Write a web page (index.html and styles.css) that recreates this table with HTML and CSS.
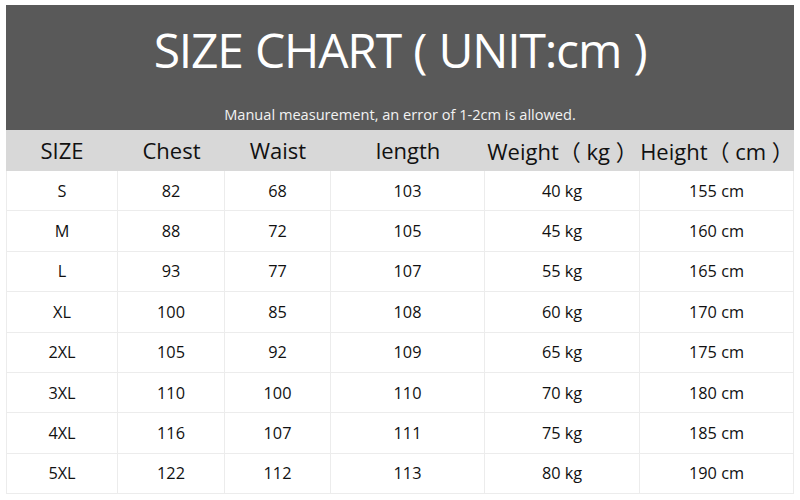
FILE: index.html
```html
<!DOCTYPE html>
<html>
<head>
<meta charset="utf-8">
<link rel="stylesheet" href="styles.css">
</head>
<body>
<div class="page">
  <header class="banner">
    <h1 class="title">SIZE CHART ( UNIT:cm )</h1>
    <p class="note">Manual measurement, an error of 1-2cm is allowed.</p>
  </header>
  <div class="chart">
    <div class="hd">SIZE</div><div class="hd">Chest</div><div class="hd">Waist</div><div class="hd">length</div><div class="hd">Weight（ kg ）</div><div class="hd">Height（ cm ）</div>
    <div class="c">S</div><div class="c">82</div><div class="c">68</div><div class="c">103</div><div class="c">40 kg</div><div class="c">155 cm</div>
    <div class="c">M</div><div class="c">88</div><div class="c">72</div><div class="c">105</div><div class="c">45 kg</div><div class="c">160 cm</div>
    <div class="c">L</div><div class="c">93</div><div class="c">77</div><div class="c">107</div><div class="c">55 kg</div><div class="c">165 cm</div>
    <div class="c">XL</div><div class="c">100</div><div class="c">85</div><div class="c">108</div><div class="c">60 kg</div><div class="c">170 cm</div>
    <div class="c">2XL</div><div class="c">105</div><div class="c">92</div><div class="c">109</div><div class="c">65 kg</div><div class="c">175 cm</div>
    <div class="c">3XL</div><div class="c">110</div><div class="c">100</div><div class="c">110</div><div class="c">70 kg</div><div class="c">180 cm</div>
    <div class="c">4XL</div><div class="c">116</div><div class="c">107</div><div class="c">111</div><div class="c">75 kg</div><div class="c">185 cm</div>
    <div class="c">5XL</div><div class="c">122</div><div class="c">112</div><div class="c">113</div><div class="c">80 kg</div><div class="c">190 cm</div>
  </div>
</div>
</body>
</html>
```
FILE: styles.css
```css
html, body {
  margin: 0;
  padding: 0;
  background: #ffffff;
}
body {
  font-family: "Open Sans", "Noto Sans CJK SC", sans-serif;
  color: #111;
}
.page {
  padding: 5px 6px 0 6px;
  width: 788px;
}
.banner {
  background: #595959;
  height: 125px;
  display: flex;
  flex-direction: column;
  align-items: center;
  box-sizing: border-box;
  padding-top: 18px;
}
.title {
  margin: 0;
  font-weight: 400;
  font-size: 48px;
  line-height: 54px;
  color: #ffffff;
  letter-spacing: -1.2px;
  word-spacing: 1px;
}
.note {
  margin: 28px 0 0 0;
  font-size: 14.6px;
  line-height: 18px;
  color: #f2f2f2;
}
.chart {
  display: grid;
  grid-template-columns: 112px 107px 106px 154px 155px 154px;
  grid-template-rows: 41px repeat(8, 40.4px);
}
.hd {
  background: #d8d8d8;
  display: flex;
  align-items: center;
  justify-content: center;
  padding-bottom: 2px;
  font-size: 22px;
  color: #111;
  white-space: nowrap;
}
.c {
  display: flex;
  align-items: center;
  justify-content: center;
  font-size: 16.3px;
  color: #111;
  border-right: 1px solid #ececec;
  border-bottom: 1px solid #ececec;
}
.c:nth-child(6n+1) {
  border-left: 1px solid #ececec;
}
```
